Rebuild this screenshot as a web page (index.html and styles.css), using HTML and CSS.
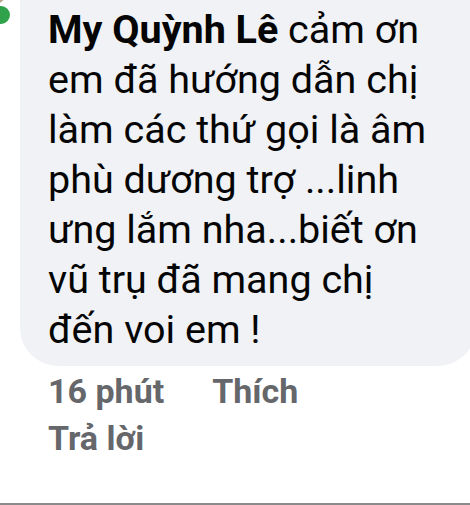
FILE: index.html
```html
<!DOCTYPE html>
<html lang="vi">
<head>
<meta charset="utf-8">
<link rel="stylesheet" href="styles.css">
</head>
<body>
<div class="page">
  <div class="avatar"><span class="online"></span></div>
  <div class="bubble">
    <p class="comment"><span class="name">My Quỳnh Lê</span> cảm ơn em đã hướng dẫn chị làm các thứ gọi là âm phù dương trợ ...linh ưng lắm nha...biết ơn vũ trụ đã mang chị đến voi em !</p>
  </div>
  <div class="actions">
    <span class="time">16 phút</span>
    <span class="act">Thích</span>
    <span class="act">Trả lời</span>
  </div>
  <div class="divider"></div>
</div>
</body>
</html>
```

FILE: styles.css
```css
html, body {
  margin: 0;
  padding: 0;
  background: #ffffff;
}
body {
  width: 470px;
  height: 505px;
  overflow: hidden;
  font-family: Roboto, "Noto Sans", sans-serif;
}
.page {
  position: relative;
  height: 505px;
  display: flex;
  flex-direction: column;
}
.avatar {
  position: absolute;
  left: -30px;
  top: -40px;
  width: 40px;
  height: 46px;
  border-radius: 50%;
  background: #b9a58c;
}
.online {
  position: absolute;
  left: 20px;
  top: 44px;
  width: 18px;
  height: 18px;
  border-radius: 50%;
  background: #31a24c;
  border: 2px solid #ffffff;
}
.bubble {
  margin-left: 20px;
  margin-right: -6px;
  background: #f0f2f5;
  border-radius: 0 0 38px 38px;
  padding: 5px 30px 11px 28px;
}
.comment {
  margin: 0;
  font-size: 39.5px;
  line-height: 50px;
  color: #050505;
  width: 385px;
}
.name {
  font-weight: 700;
}
.actions {
  display: flex;
  flex-wrap: wrap;
  column-gap: 48px;
  width: 330px;
  margin-top: 2px;
  padding-left: 48px;
  font-size: 34px;
  font-weight: 700;
  line-height: 47px;
  color: #65676b;
}
.divider {
  margin-top: auto;
  height: 2px;
  background: #8a8a8a;
}
```
